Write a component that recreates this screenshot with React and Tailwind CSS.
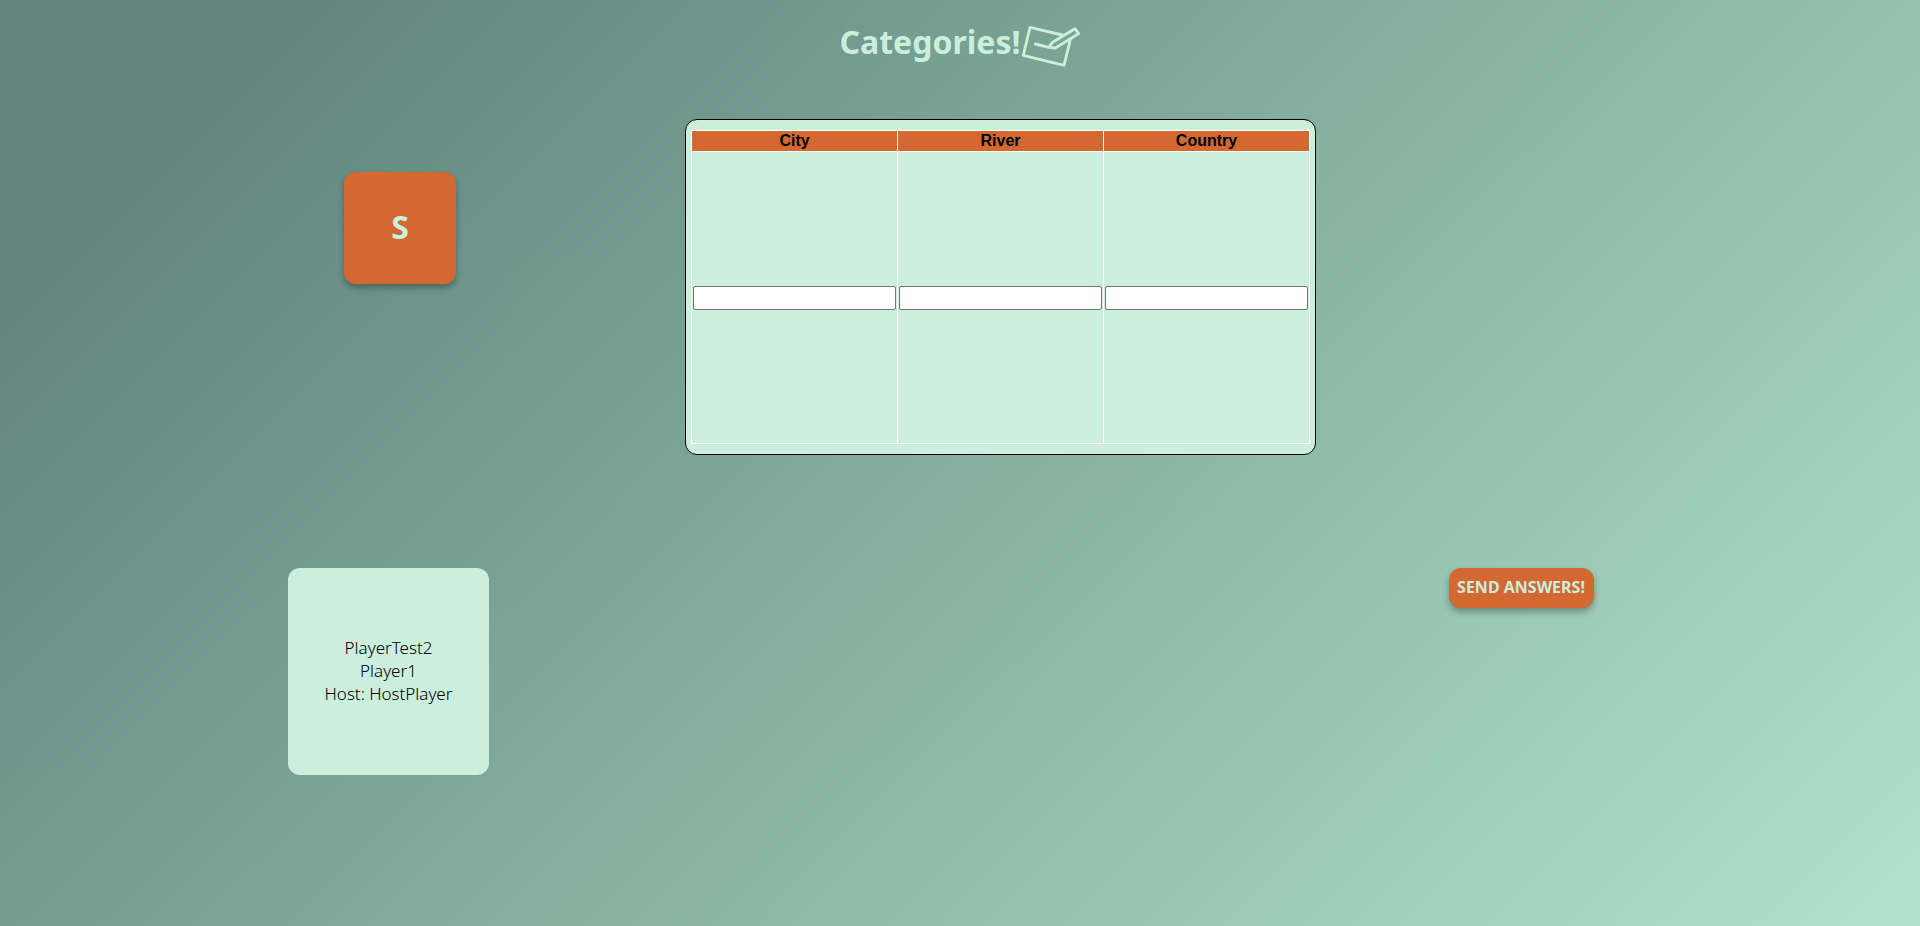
const categories = ["City", "River", "Country"];
const players = ["PlayerTest2", "Player1", "Host: HostPlayer"];

function NoteIcon() {
  return (
    <svg
      viewBox="32 32 180 126"
      className="h-[42px] w-[60px]"
      fill="none"
      stroke="currentColor"
      strokeWidth="8.5"
      strokeLinecap="round"
      strokeLinejoin="round"
      aria-hidden="true"
    >
      <path d="M156 62 59 39 39 123 161 153 179 80" />
      <path d="M75 89 116 99 135 101 205 58 194 43 127 84Q119 91 117 98" />
    </svg>
  );
}

export default function App() {
  return (
    <div className="min-h-screen bg-[linear-gradient(135deg,#61847c_10%,#b1e4cb)] font-['Noto_Sans',sans-serif] text-black">
      <header className="flex h-[119px] items-start justify-center pt-[17px] text-[#cbeedd]">
        <h1 className="flex items-center text-[32px] leading-[50px] font-bold">
          Categories!
          <span className="pt-2">
            <NoteIcon />
          </span>
        </h1>
      </header>

      <main className="mx-auto grid w-[70%] grid-cols-[1fr_4fr_1fr] grid-rows-[449px_auto]">
        <div className="flex justify-center pt-[53px]">
          <div className="flex size-28 items-center justify-center rounded-xl bg-[#d36830] pb-0.5 text-[32px] font-bold text-[#cbeedd] shadow-[0_4px_6px_rgba(0,0,0,0.3)]">
            S
          </div>
        </div>

        <div className="flex items-start justify-center pl-[81px]">
          <div className="flex h-[336px] w-full max-w-[631px] rounded-xl border border-black bg-[#cbeedd] px-[5px] py-2.5">
            <table className="h-full w-full table-fixed border-collapse font-['Liberation_Sans',Arial,sans-serif]">
              <thead>
                <tr className="h-[21px] bg-[#d36830]">
                  {categories.map((name) => (
                    <th key={name} id={name} scope="col" className="border border-white p-0 text-base leading-5 font-bold">
                      {name}
                    </th>
                  ))}
                </tr>
              </thead>
              <tbody>
                <tr>
                  {categories.map((name) => (
                    <td key={name} className="border border-white p-px align-middle">
                      <input
                        type="text"
                        aria-labelledby={name}
                        className="block h-6 w-full rounded-[2px] border border-[#767676] bg-white px-1 text-sm"
                      />
                    </td>
                  ))}
                </tr>
              </tbody>
            </table>
          </div>
        </div>

        <div />

        <ul className="flex h-[207px] w-[201px] flex-col items-center justify-center rounded-xl bg-[#cbeedd] pb-0.5 text-[17px] leading-[23px] font-light">
          {players.map((player) => (
            <li key={player}>{player}</li>
          ))}
        </ul>

        <div />

        <div className="flex items-start justify-center pl-0.5">
          <button
            type="button"
            className="h-10 w-[145px] rounded-xl bg-[#d36830] pb-0.5 text-base font-bold whitespace-nowrap text-[#cbeedd] shadow-[0_4px_6px_rgba(0,0,0,0.3)]"
          >
            SEND ANSWERS!
          </button>
        </div>
      </main>
    </div>
  );
}
